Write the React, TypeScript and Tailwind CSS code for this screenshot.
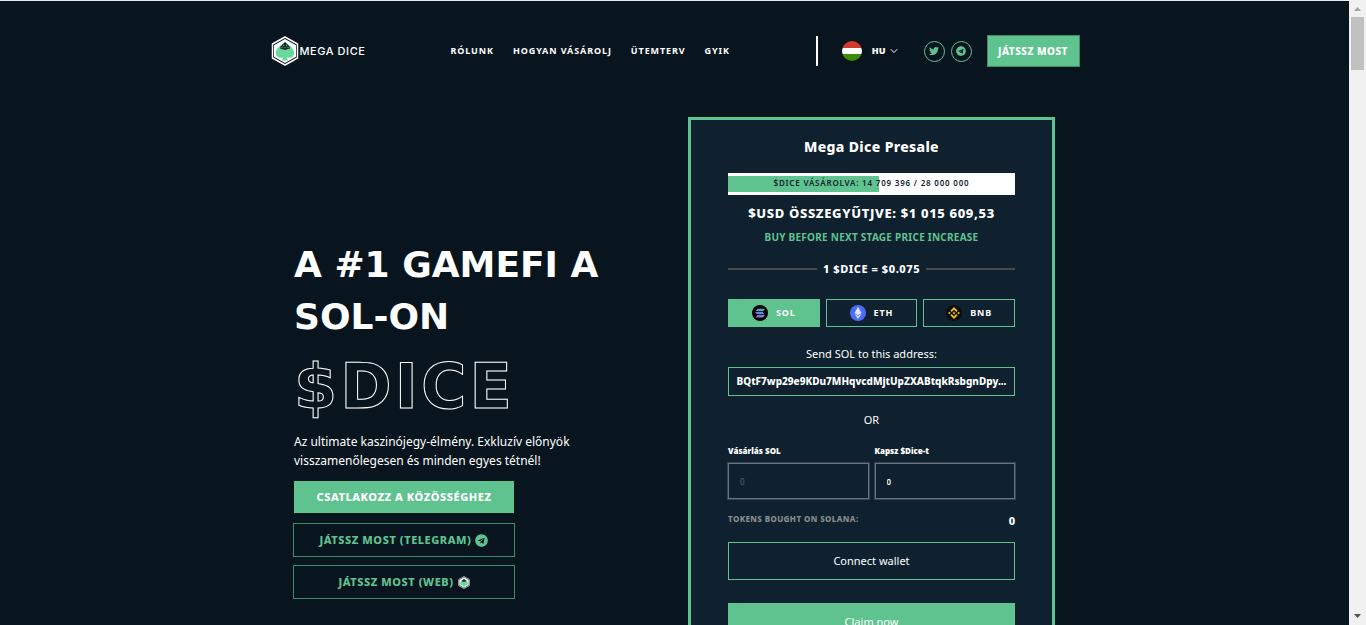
import { ChevronDown } from 'lucide-react';
import { FaEthereum, FaTelegram, FaTwitter } from 'react-icons/fa';
import { SiBinance } from 'react-icons/si';

const navLinks = ['Rólunk', 'Hogyan vásárolj', 'Ütemterv', 'GYIK'];

const bought = 14709396;
const total = 28000000;

function DiceBadge({ className }: { className: string }) {
  return (
    <svg viewBox="0 0 28 30" className={className} aria-hidden="true">
      <path d="M14 1 26.500 8v14L14 29 1.500 22V8Z" fill="#0a151e" stroke="#fff" strokeWidth="1.5" strokeLinejoin="round" />
      <path d="M14 3 25 9.200v11.600L14 27 3 20.800V9.200Z" fill="#fff" />
      <path
        d="M14 6C11 9 4.800 11.500 4.800 17c0 4 4 5.800 7.400 4.300L11 24.500h6l-1.200-3.200c3.400 1.500 7.400-.3 7.400-4.300C23.200 11.500 17 9 14 6Z"
        fill="#66d99b"
      />
      <path d="M14 6 9.500 10.500 9 12.500 14 14l5-1.500-.5-2Z" fill="#1d2f35" />
      <path d="M10.500 11.500h1M13.500 11.500h1M16.500 11.500h1M12 9.500h1M15 9.500h1" stroke="#66d99b" strokeWidth=".8" />
    </svg>
  );
}

function HungarianFlag() {
  return (
    <span className="flex size-5 flex-col overflow-hidden rounded-full" aria-hidden="true">
      <span className="flex-1 bg-[#d43a2b]" />
      <span className="flex-1 bg-white" />
      <span className="flex-1 bg-[#3e8c0b]" />
    </span>
  );
}

function SolanaIcon() {
  return (
    <svg viewBox="0 0 16 16" className="size-4" aria-hidden="true">
      <defs>
        <linearGradient id="sol" x1="4" y1="12" x2="12" y2="4" gradientUnits="userSpaceOnUse">
          <stop stopColor="#8a5cf0" />
          <stop offset="1" stopColor="#4fb5b5" />
        </linearGradient>
      </defs>
      <circle cx="8" cy="8" r="8" fill="#000" />
      <path d="M5.500 3.800H13l-2 2.400H3.500ZM3 6.900h7.500l2 2.400H5ZM5.500 10H13l-2 2.400H3.500Z" fill="url(#sol)" />
    </svg>
  );
}

const coins = [
  { name: 'SOL', icon: <SolanaIcon /> },
  {
    name: 'ETH',
    icon: (
      <span className="flex size-4 items-center justify-center rounded-full bg-[#4a6cf7]">
        <FaEthereum className="size-3 text-[#dfe6ff]" />
      </span>
    ),
  },
  {
    name: 'BNB',
    icon: (
      <span className="flex size-4 items-center justify-center rounded-full bg-[#0b0e11]">
        <SiBinance className="size-3 text-[#f0b90b]" />
      </span>
    ),
  },
];

function Header() {
  return (
    <header className="mx-auto flex h-8 w-full max-w-[810px] items-center">
      <a href="#" className="flex items-center gap-px pl-px">
        <DiceBadge className="h-[30px] w-7" />
        <span className="font-['Inter'] text-[11px] font-medium tracking-wider text-white">MEGA DICE</span>
      </a>
      <nav className="ml-[85px] flex gap-[19px] text-[9px] font-bold tracking-widest uppercase">
        {navLinks.map((link) => (
          <a key={link} href="#">
            {link}
          </a>
        ))}
      </nav>
      <div className="ml-auto flex items-center">
        <span className="h-[30px] w-0.5 bg-white" />
        <button type="button" className="ml-6 flex items-center text-[9px] font-black">
          <HungarianFlag />
          <span className="ml-2.5">HU</span>
          <ChevronDown className="ml-0.5 size-3" />
        </button>
        <a
          href="#"
          aria-label="Twitter"
          className="ml-6 flex size-[21px] items-center justify-center rounded-full border border-[#5fc390] text-[#5fc390]"
        >
          <FaTwitter className="size-[10px]" />
        </a>
        <a
          href="#"
          aria-label="Telegram"
          className="ml-1.5 flex size-[21px] items-center justify-center rounded-full border border-[#5fc390] text-[#5fc390]"
        >
          <FaTelegram className="size-[10px]" />
        </a>
        <a
          href="#"
          className="ml-[15px] flex h-8 w-[93px] items-center justify-center border border-[#3f8b68] bg-[#5fc390] text-[10px] font-extrabold tracking-wider"
        >
          JÁTSSZ MOST
        </a>
      </div>
    </header>
  );
}

function Hero() {
  return (
    <section className="w-[310px] pt-[122px]">
      <h1 className="font-['DejaVu_Sans'] font-bold">
        <span className="block text-[36px] leading-[52px]">A #1 GAMEFI A SOL-ON</span>
        <span className="mt-3 block text-[62px] leading-[64px] tracking-wider text-transparent [-webkit-text-stroke:1px_white]">
          $DICE
        </span>
      </h1>
      <p className="mt-[13px] text-[12px] leading-[19px]">
        Az ultimate kaszinójegy-élmény. Exkluzív előnyök visszamenőlegesen és minden egyes tétnél!
      </p>
      <div className="mt-[11px] flex w-[220px] flex-col gap-2.5 text-[11px] font-extrabold tracking-wider">
        <a href="#" className="mb-px flex h-8 items-center justify-center bg-[#5fc390]">
          CSATLAKOZZ A KÖZÖSSÉGHEZ
        </a>
        <a href="#" className="flex h-8 items-center justify-center gap-1 text-[#5fc390] outline outline-[#3f8b68]">
          JÁTSSZ MOST (TELEGRAM)
          <FaTelegram className="size-[13px]" />
        </a>
        <a href="#" className="flex h-8 items-center justify-center gap-1 text-[#5fc390] outline outline-[#3f8b68]">
          JÁTSSZ MOST (WEB)
          <DiceBadge className="h-[13px] w-3" />
        </a>
      </div>
    </section>
  );
}

function PresaleCard() {
  return (
    <section className="flex w-[367px] flex-col border-[3px] border-[#5fc390] bg-[#0f212e] px-[37px] pt-[15px] pb-8 text-center">
      <h2 className="text-[14px] leading-6 font-extrabold tracking-wide">Mega Dice Presale</h2>

      <div className="relative mt-3.5 h-[22px] bg-white py-[3px] text-[#12232f]">
        <div className="h-4 bg-[#5fc390]" style={{ width: `${(bought / total) * 100}%` }} />
        <span className="absolute inset-0 text-[8px] leading-[20px] font-semibold tracking-widest">
          $DICE VÁSÁROLVA: 14 709 396 / 28 000 000
        </span>
      </div>

      <p className="mt-1.5 text-[13px] leading-6 font-extrabold tracking-wider">$USD ÖSSZEGYŰTJVE: $1 015 609,53</p>
      <p className="text-[10px] leading-6 font-bold tracking-wide text-[#5fc390]">BUY BEFORE NEXT STAGE PRICE INCREASE</p>
      <div className="mt-2 flex items-center gap-1.5 text-[11px] leading-6 font-extrabold tracking-wider">
        <span className="h-0.5 flex-1 bg-[#484848]" />
        1 $DICE = $0.075
        <span className="h-0.5 flex-1 bg-[#484848]" />
      </div>

      <div className="mt-[18px] grid grid-cols-3 gap-1.5">
        {coins.map((coin, i) => (
          <button
            key={coin.name}
            type="button"
            className={`flex h-7 items-center justify-center gap-2 border border-[#5fc390] text-[9px] font-bold tracking-widest ${i === 0 ? 'bg-[#5fc390]' : ''}`}
          >
            {coin.icon}
            {coin.name}
          </button>
        ))}
      </div>

      <p className="mt-[17px] text-[11px] leading-5">Send SOL to this address:</p>
      <div className="mt-[3px] h-[29px] border border-[#5fc390] text-[10px] leading-[27px] font-extrabold whitespace-nowrap">
        BQtF7wp29e9KDu7MHqvcdMjtUpZXABtqkRsbgnDpy...
      </div>
      <p className="mt-3.5 text-[11px] leading-5">OR</p>

      <div className="mt-[13px] grid grid-cols-2 gap-1.5 text-left text-[8px]">
        <div>
          <label htmlFor="pay" className="block leading-4 font-black">
            Vásárlás SOL
          </label>
          <input
            id="pay"
            placeholder="0"
            className="mt-1 h-9 w-full border border-[#6b7280] px-[11px] outline outline-[#364350] placeholder:text-[#5d666f]"
          />
        </div>
        <div>
          <label htmlFor="receive" className="block leading-4 font-black">
            Kapsz $Dice-t
          </label>
          <input
            id="receive"
            defaultValue="0"
            className="mt-1 h-9 w-full border border-[#6b7280] px-[11px] font-semibold outline outline-[#364350]"
          />
        </div>
      </div>

      <div className="mt-3 flex justify-between">
        <span className="text-[8px] leading-4 font-extrabold tracking-wider text-[#8a8d90]">
          TOKENS BOUGHT ON SOLANA:
        </span>
        <span className="text-[11px] leading-5 font-extrabold">0</span>
      </div>

      <button type="button" className="mt-[11px] h-[38px] border border-[#5fc390] text-[11px]">
        Connect wallet
      </button>
      <button type="button" className="mt-[23px] h-[38px] bg-[#5fc390] text-[11px]">
        Claim now
      </button>
    </section>
  );
}

function ScrollTrack() {
  return (
    <div className="flex w-[17px] shrink-0 flex-col items-center bg-[#f1f1f1]" aria-hidden="true">
      <svg viewBox="0 0 17 17" className="size-[17px]">
        <path d="M5 11h7L8.500 7Z" fill="#a3a3a3" />
      </svg>
      <span className="h-[53px] w-[13px] bg-[#c1c1c1]" />
      <svg viewBox="0 0 17 17" className="mt-auto size-[17px]">
        <path d="M5 6h7L8.500 10Z" fill="#505050" />
      </svg>
    </div>
  );
}

export default function App() {
  return (
    <div className="flex h-screen overflow-hidden bg-[#09151e] font-['Noto_Sans',sans-serif] text-white">
      <main className="flex-1 border-t border-[#e5e7eb] pt-[34px]">
        <Header />
        <div className="mx-auto mt-[50px] flex w-full max-w-[761px] items-start justify-between">
          <Hero />
          <PresaleCard />
        </div>
      </main>
      <ScrollTrack />
    </div>
  );
}
